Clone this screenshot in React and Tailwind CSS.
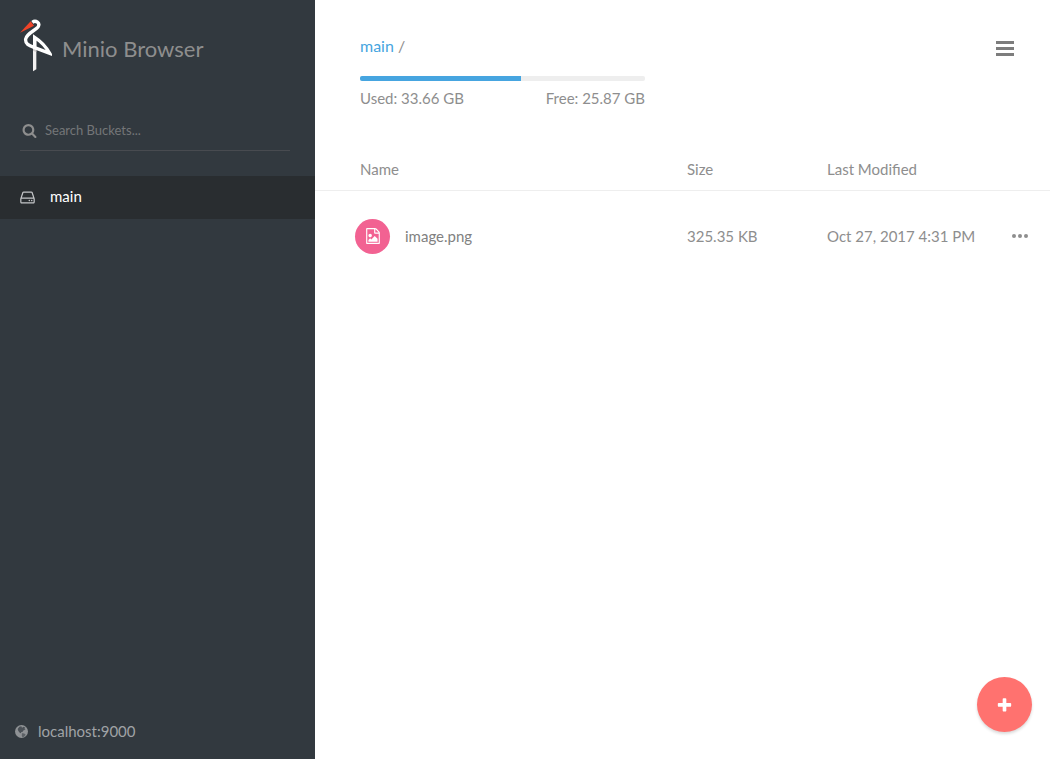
const icons = {
  search:
    "M1216 832q0-185-131.5-316.5t-316.5-131.5-316.5 131.5-131.5 316.5 131.5 316.5 316.5 131.5 316.5-131.5 131.5-316.5zm512 832q0 52-38 90t-90 38q-54 0-90-38l-343-342q-179 124-399 124-143 0-273.5-55.5t-225-150-150-225-55.5-273.5 55.5-273.5 150-225 225-150 273.5-55.5 273.5 55.5 225 150 150 225 55.5 273.5q0 220-124 399l343 343q37 37 37 90z",
  drive:
    "M1168 1216q0 33-23.5 56.5t-56.5 23.5-56.5-23.5-23.5-56.5 23.5-56.5 56.5-23.5 56.5 23.5 23.5 56.5zm256 0q0 33-23.5 56.5t-56.5 23.5-56.5-23.5-23.5-56.5 23.5-56.5 56.5-23.5 56.5 23.5 23.5 56.5zm112 160v-320q0-13-9.5-22.5t-22.5-9.5h-1216q-13 0-22.5 9.5t-9.5 22.5v320q0 13 9.5 22.5t22.5 9.5h1216q13 0 22.5-9.5t9.5-22.5zm-1230-480h1180l-157-482q-4-13-16-21.5t-26-8.5h-782q-14 0-26 8.5t-16 21.5zm1358 160v320q0 66-47 113t-113 47h-1216q-66 0-113-47t-47-113v-320q0-25 16-75l197-606q17-53 63-86t101-33h782q55 0 101 33t63 86l197 606q16 50 16 75z",
  image:
    "M1596 380q28 28 48 76t20 88v1152q0 40-28 68t-68 28h-1344q-40 0-68-28t-28-68v-1600q0-40 28-68t68-28h896q40 0 88 20t76 48zm-444-244v376h376q-10-29-22-41l-313-313q-12-12-41-22zm384 1528v-1024h-416q-40 0-68-28t-28-68v-416h-768v1536h1280zm-128-448v320h-1024v-192l192-192 128 128 384-384zm-832-192q-80 0-136-56t-56-136 56-136 136-56 136 56 56 136-56 136-136 56z",
  plus: "M1600 736v192q0 40-28 68t-68 28h-416v416q0 40-28 68t-68 28h-192q-40 0-68-28t-28-68v-416h-416q-40 0-68-28t-28-68v-192q0-40 28-68t68-28h416v-416q0-40 28-68t68-28h192q40 0 68 28t28 68v416h416q40 0 68 28t28 68z",
};

function Icon({ name, className }) {
  return (
    <svg viewBox="0 0 1792 1792" fill="currentColor" aria-hidden="true" className={className}>
      <path d={icons[name]} />
    </svg>
  );
}

function Globe() {
  return (
    <svg viewBox="0 0 39 39" className="size-[13px] shrink-0" aria-hidden="true">
      <circle cx="19.5" cy="19.5" r="19.5" fill="#8f9295" />
      <path
        d="M13 5 L19 4 L21 8 L26 5 L31 8 L28 12 L32 14 L26 16 L22 21 L18 21 L19 25 L15 24 L10 18 L8 12 Z"
        fill="#4b5157"
      />
      <path d="M22 24 L29 26 L32 29 L27 35 L22 37 L20 30 Z" fill="#5c6166" />
    </svg>
  );
}

function StorkLogo() {
  return (
    <svg viewBox="30 27 96 159" className="h-[53px] w-8 shrink-0" aria-hidden="true">
      <path d="M69 77 L79 85 V178 L69 184 Z" fill="#f3f1f1" />
      <path
        d="M67 37 C77 29 92 39 84 51 C77 61 50 70 47 87 C45 102 57 107 72 112 L119 130 C108 110 96 96 74 82 V112"
        fill="none"
        stroke="#fff"
        strokeWidth="10"
        strokeLinejoin="miter"
        strokeMiterlimit="4"
      />
      <path d="M69 117 L79 121 V126 L69 122 Z" fill="#cfcccc" />
      <path d="M30 68 L62 34 L72 47 Z" fill="#ee4328" />
    </svg>
  );
}

function Sidebar() {
  return (
    <aside className="flex w-[315px] shrink-0 flex-col bg-[#32393f]">
      <div className="flex items-center gap-[10px] px-5 pt-[19px]">
        <StorkLogo />
        <h1 className="pt-[6px] text-[22px] leading-8 text-[#8e8e8e]">Minio Browser</h1>
      </div>
      <label className="mt-[38px] mr-[25px] ml-5 flex h-[41px] items-center gap-2 border-b border-[#484b50] pl-[2px] text-[#8e8e8e]">
        <Icon name="search" className="size-[15px] shrink-0" />
        <input
          type="text"
          aria-label="Search Buckets"
          placeholder="Search Buckets..."
          className="w-full bg-transparent pt-px text-[13px] outline-none placeholder:text-[#747678]"
        />
      </label>
      <nav className="mt-[25px]">
        <a href="#main" className="flex h-[43px] items-center gap-[14px] bg-[#292d30] pl-[19px] text-[15px] text-white">
          <Icon name="drive" className="size-[17px] text-[#c4c6c8]" />
          <span className="pb-[2px]">main</span>
        </a>
      </nav>
      <footer className="mt-auto flex items-center gap-[10px] px-[15px] pb-4 text-[15px] leading-6 text-[#a0a3a6]">
        <Globe />
        <span>localhost:9000</span>
      </footer>
    </aside>
  );
}

const objects = [{ name: "image.png", size: "325.35 KB", modified: "Oct 27, 2017 4:31 PM" }];

function ObjectTable() {
  return (
    <table className="mt-[38px] w-full table-fixed text-left">
      <thead>
        <tr className="border-b border-[#eee]">
          <th className="h-[42px] pl-[45px] font-normal">Name</th>
          <th className="w-[140px] font-normal">Size</th>
          <th className="w-[175px] font-normal">Last Modified</th>
          <th className="w-12" aria-label="Actions" />
        </tr>
      </thead>
      <tbody>
        {objects.map((o) => (
          <tr key={o.name}>
            <td className="h-[92px] pl-10">
              <div className="flex items-center gap-[15px]">
                <span className="flex size-[35px] items-center justify-center rounded-full bg-[#f26292] text-white">
                  <Icon name="image" className="size-4" />
                </span>
                <a href="#image" className="pb-px text-[#818181]">{o.name}</a>
              </div>
            </td>
            <td>{o.size}</td>
            <td>{o.modified}</td>
            <td>
              <button type="button" aria-label="Object actions" className="flex h-6 w-9 items-center justify-center">
                <svg viewBox="0 0 16 4" fill="currentColor" className="h-1 w-4">
                  <circle cx="2" cy="2" r="2" />
                  <circle cx="8" cy="2" r="2" />
                  <circle cx="14" cy="2" r="2" />
                </svg>
              </button>
            </td>
          </tr>
        ))}
      </tbody>
    </table>
  );
}

export default function App() {
  return (
    <div className="flex min-h-screen bg-white font-['Lato',sans-serif] text-[15px] text-[#8e8e8e]">
      <Sidebar />
      <main className="min-w-0 flex-1">
        <header className="flex items-start justify-between pt-[34px] pr-[35px] pl-[45px]">
          <div className="w-[285px]">
            <div className="text-base leading-6">
              <a href="#main" className="text-[#46a5e0]">main</a> /
            </div>
            <div className="mt-[18px] h-[5px] overflow-hidden rounded-xs bg-[#eee]">
              <div className="h-full w-[161px] bg-[#46a5e0]" />
            </div>
            <div className="mt-[5px] flex justify-between leading-6">
              <span>Used: 33.66 GB</span>
              <span>Free: 25.87 GB</span>
            </div>
          </div>
          <button type="button" aria-label="Menu" className="mt-[6px] flex h-4 w-5 items-center justify-center">
            <svg viewBox="0 0 18 15" fill="#7d7d7d" className="h-[15px] w-[18px]">
              <path d="M0 0h18v3H0zM0 6h18v3H0zM0 12h18v3H0z" />
            </svg>
          </button>
        </header>
        <ObjectTable />
      </main>
      <button
        type="button"
        aria-label="Add"
        className="fixed right-[18px] bottom-[27px] flex size-[55px] items-center justify-center rounded-full bg-[#ff726f] pt-[2px] text-white shadow-[0_2px_3px_rgba(0,0,0,0.15)]"
      >
        <Icon name="plus" className="size-[17px]" />
      </button>
    </div>
  );
}
